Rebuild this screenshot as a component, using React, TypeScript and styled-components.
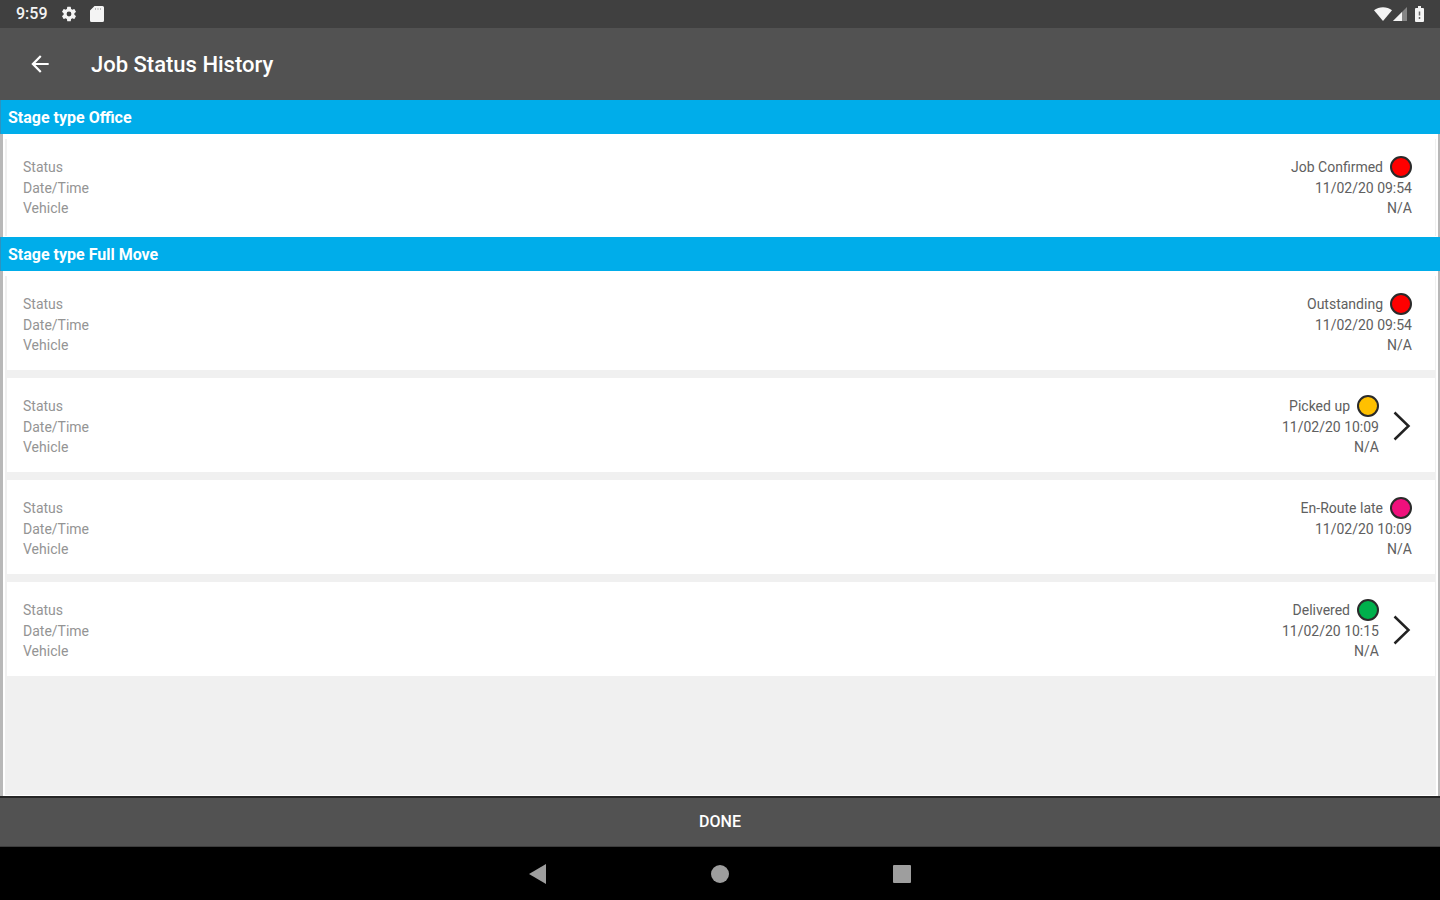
import React from "react";
import styled, { createGlobalStyle } from "styled-components";

const GlobalStyle = createGlobalStyle`
  *, *::before, *::after { box-sizing: border-box; }
  body {
    margin: 0;
    background: #000;
    font-family: Roboto, "Liberation Sans", sans-serif;
  }
  button { font-family: inherit; }
`;

const Screen = styled.div`
  display: flex;
  flex-direction: column;
  min-height: 100vh;
`;

const StatusBar = styled.div`
  display: flex;
  align-items: center;
  justify-content: space-between;
  height: 28px;
  padding: 0 16px;
  background: #404040;
  color: #f4f4f4;
`;

const StatusGroup = styled.div<{ $gap: number }>`
  display: flex;
  align-items: center;
  gap: ${(p) => p.$gap}px;
  svg { display: block; }
`;

const Clock = styled.span`
  font-size: 16px;
  font-weight: 500;
  line-height: 20px;
`;

const AppBar = styled.header`
  display: flex;
  align-items: center;
  gap: 38px;
  height: 72px;
  padding: 0 27px;
  background: #525252;
  color: #fff;
`;

const IconButton = styled.button`
  display: flex;
  align-items: center;
  justify-content: center;
  flex: none;
  padding: 0;
  border: 0;
  background: none;
  color: inherit;
  cursor: pointer;
`;

const Title = styled.h1`
  margin: 0;
  padding-top: 2px;
  font-size: 22px;
  font-weight: 500;
  line-height: 28px;
`;

const History = styled.main`
  display: flex;
  flex-direction: column;
  flex: 1;
  background: #f0f0f0;
  border-left: 3px solid #b8b8b8;
  border-right: 2px solid #b8b8b8;
`;

const Stage = styled.section`
  display: flex;
  flex-direction: column;
  &:last-child { flex: 1; }
`;

const StageHeader = styled.h2`
  height: 34px;
  margin: 0 -2px 0 -3px;
  padding: 2px 8px 0 7px;
  border-left: 1px solid #2c93c0;
  background: #00adea;
  color: #fff;
  font-size: 16px;
  font-weight: 700;
  line-height: 32px;
`;

const StageList = styled.ul`
  display: flex;
  flex-direction: column;
  flex: 1;
  gap: 8px;
  margin: 0;
  padding: 0 1px 0 2px;
  border: solid #fff;
  border-width: 5px 2px 1px;
  list-style: none;
`;

const Card = styled.li`
  display: flex;
  align-items: center;
  gap: 13px;
  height: 94px;
  padding: 2px 23px 0 16px;
  background: #fff;

  ${Stage}:not(:last-child) & {
    height: 97px;
    padding-bottom: 3px;
  }
`;

const Details = styled.dl`
  flex: 1;
  margin: 0;
`;

const Row = styled.div<{ $tall?: boolean }>`
  display: flex;
  align-items: center;
  justify-content: space-between;
  height: ${(p) => (p.$tall ? 22 : 20)}px;
  font-size: 14px;
  line-height: 20px;
`;

const Label = styled.dt`
  color: #949494;
`;

const Value = styled.dd`
  display: flex;
  align-items: center;
  gap: 7px;
  margin: 0;
  color: #606060;
`;

const Dot = styled.span<{ $color: string }>`
  width: 22px;
  height: 22px;
  border: 2px solid #2a2a2a;
  border-radius: 50%;
  background: ${(p) => p.$color};
`;

const DoneButton = styled.button`
  height: 51px;
  padding: 0;
  border: 0;
  border-top: 2px solid #262626;
  border-bottom: 1px solid #3c3c3c;
  background: #525252;
  color: #fff;
  font-size: 16px;
  font-weight: 500;
  line-height: 20px;
  cursor: pointer;
`;

const NavBar = styled.nav`
  display: flex;
  align-items: center;
  justify-content: center;
  gap: 158px;
  height: 53px;
  background: #000;
  color: #9e9e9e;
`;

interface Entry {
  status: string;
  color: string;
  time: string;
  vehicle: string;
  link?: boolean;
}

const stages: { title: string; entries: Entry[] }[] = [
  {
    title: "Stage type Office",
    entries: [{ status: "Job Confirmed", color: "#ff0000", time: "11/02/20 09:54", vehicle: "N/A" }],
  },
  {
    title: "Stage type Full Move",
    entries: [
      { status: "Outstanding", color: "#ff0000", time: "11/02/20 09:54", vehicle: "N/A" },
      { status: "Picked up", color: "#ffc000", time: "11/02/20 10:09", vehicle: "N/A", link: true },
      { status: "En-Route late", color: "#f0107c", time: "11/02/20 10:09", vehicle: "N/A" },
      { status: "Delivered", color: "#00b04c", time: "11/02/20 10:15", vehicle: "N/A", link: true },
    ],
  },
];

const GearIcon = () => (
  <svg width="18" height="18" viewBox="0 0 24 24" fill="currentColor" aria-hidden="true">
    <path d="M19.14 12.94c.04-.3.06-.61.06-.94 0-.32-.02-.64-.07-.94l2.03-1.58a.49.49 0 0 0 .12-.61l-1.92-3.32a.49.49 0 0 0-.59-.22l-2.39.96a7 7 0 0 0-1.62-.94l-.36-2.54a.48.48 0 0 0-.48-.41h-3.84a.47.47 0 0 0-.47.41l-.36 2.54c-.59.24-1.13.57-1.62.94l-2.39-.96a.47.47 0 0 0-.59.22L2.74 8.87a.48.48 0 0 0 .12.61l2.03 1.58c-.05.3-.09.63-.09.94s.02.64.07.94l-2.03 1.58a.49.49 0 0 0-.12.61l1.92 3.32c.12.22.37.29.59.22l2.39-.96c.5.38 1.03.7 1.62.94l.36 2.54c.05.24.24.41.48.41h3.84c.24 0 .44-.17.47-.41l.36-2.54c.59-.24 1.13-.56 1.62-.94l2.39.96c.22.08.47 0 .59-.22l1.92-3.32a.47.47 0 0 0-.12-.61l-2.01-1.58zM12 15.2a3.2 3.2 0 1 1 0-6.4 3.2 3.2 0 0 1 0 6.4z" />
  </svg>
);

const CardIcon = () => (
  <svg width="14" height="16" viewBox="0 0 14 16" aria-hidden="true">
    <path d="M4.500 0h8a1.500 1.500 0 0 1 1.500 1.500v13a1.500 1.500 0 0 1-1.500 1.500h-11A1.500 1.500 0 0 1 0 14.500V4.500z" fill="currentColor" />
    <path d="M5.500 2v2M8 2v2M10.500 2v2" stroke="#b8b8b8" />
  </svg>
);

const WifiIcon = () => (
  <svg width="18" height="14" viewBox="0 0 18 14" fill="currentColor" aria-hidden="true">
    <path d="M0 3.200C5-.9 13-.9 18 3.200L9 14z" />
  </svg>
);

const SignalIcon = () => (
  <svg width="14" height="14" viewBox="0 0 14 14" aria-hidden="true">
    <path d="M14 0v14H0z" fill="#858585" />
    <path d="M9 5v9H0z" fill="currentColor" />
  </svg>
);

const BatteryIcon = () => (
  <svg width="9" height="16" viewBox="0 0 9 16" aria-hidden="true">
    <path d="M3 0h3v2h2a1 1 0 0 1 1 1v12a1 1 0 0 1-1 1H1a1 1 0 0 1-1-1V3a1 1 0 0 1 1-1h2z" fill="currentColor" />
    <path d="M4.500 5.500v4M4.500 11v2" stroke="#6a6a6a" strokeWidth="1.500" />
  </svg>
);

export default function App() {
  return (
    <Screen>
      <GlobalStyle />
      <StatusBar>
        <StatusGroup $gap={12}>
          <Clock>9:59</Clock>
          <GearIcon />
          <CardIcon />
        </StatusGroup>
        <StatusGroup $gap={8}>
          <StatusGroup $gap={1}>
            <WifiIcon />
            <SignalIcon />
          </StatusGroup>
          <BatteryIcon />
        </StatusGroup>
      </StatusBar>
      <AppBar>
        <IconButton aria-label="Back">
          <svg width="26" height="26" viewBox="0 0 24 24" fill="currentColor" aria-hidden="true">
            <path d="M20 11H7.830l5.590-5.590L12 4l-8 8 8 8 1.410-1.410L7.830 13H20z" />
          </svg>
        </IconButton>
        <Title>Job Status History</Title>
      </AppBar>
      <History>
        {stages.map((stage) => (
          <Stage key={stage.title}>
            <StageHeader>{stage.title}</StageHeader>
            <StageList>
              {stage.entries.map((entry) => (
                <Card key={entry.status}>
                  <Details>
                    <Row $tall>
                      <Label>Status</Label>
                      <Value>
                        {entry.status}
                        <Dot $color={entry.color} />
                      </Value>
                    </Row>
                    <Row>
                      <Label>Date/Time</Label>
                      <Value>{entry.time}</Value>
                    </Row>
                    <Row>
                      <Label>Vehicle</Label>
                      <Value>{entry.vehicle}</Value>
                    </Row>
                  </Details>
                  {entry.link && (
                    <IconButton aria-label={`Open ${entry.status}`}>
                      <svg width="20" height="30" viewBox="0 0 20 30" fill="none" stroke="#222" strokeWidth="2.500" aria-hidden="true">
                        <path d="M2.500 1.500L16.500 15L2.500 28.500" />
                      </svg>
                    </IconButton>
                  )}
                </Card>
              ))}
            </StageList>
          </Stage>
        ))}
      </History>
      <DoneButton>DONE</DoneButton>
      <NavBar>
        <IconButton aria-label="Navigate back">
          <svg width="24" height="24" viewBox="0 0 24 24" fill="currentColor"><path d="M20 2v20L3 12z" /></svg>
        </IconButton>
        <IconButton aria-label="Home">
          <svg width="24" height="24" viewBox="0 0 24 24" fill="currentColor"><circle cx="12" cy="12" r="9" /></svg>
        </IconButton>
        <IconButton aria-label="Recent apps">
          <svg width="24" height="24" viewBox="0 0 24 24" fill="currentColor"><rect x="3" y="3" width="18" height="18" rx="1" /></svg>
        </IconButton>
      </NavBar>
    </Screen>
  );
}
